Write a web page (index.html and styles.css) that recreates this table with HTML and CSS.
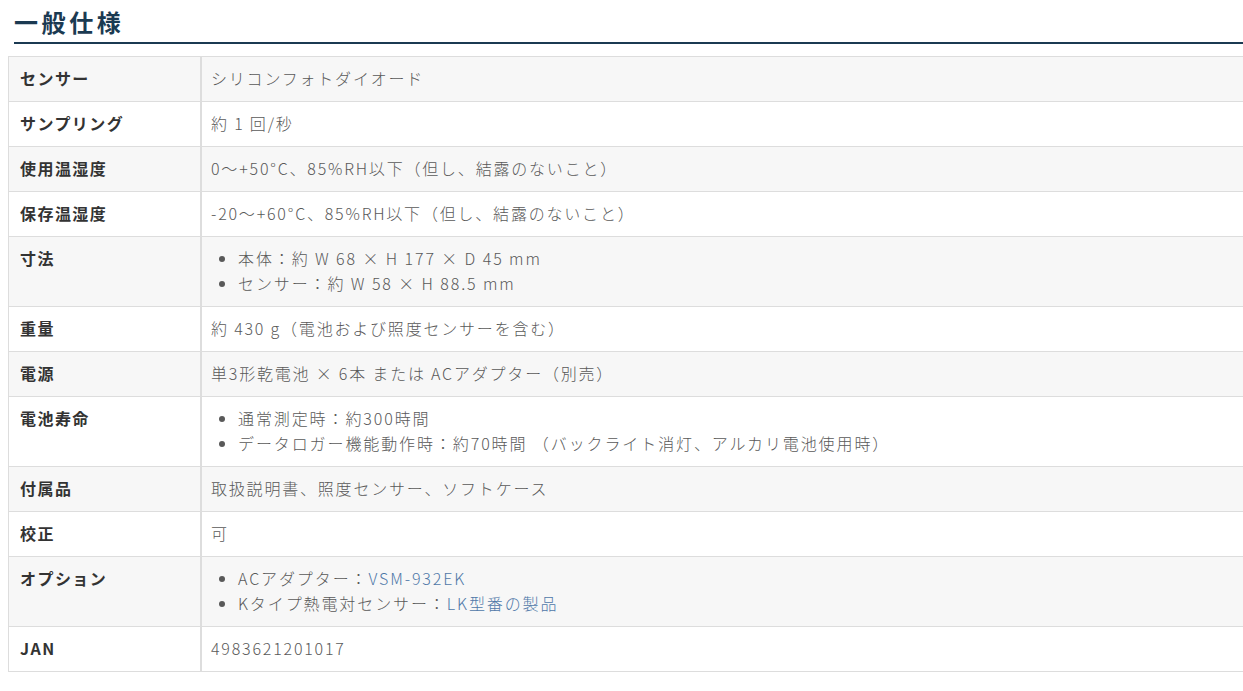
FILE: index.html
```html
<!DOCTYPE html>
<html lang="ja">
<head>
<meta charset="utf-8">
<link rel="stylesheet" href="styles.css">
</head>
<body>
<h2 class="title">一般仕様</h2>
<table class="spec">
  <tr><th>センサー</th><td>シリコンフォトダイオード</td></tr>
  <tr><th>サンプリング</th><td>約 1 回/秒</td></tr>
  <tr><th>使用温湿度</th><td>0～+50°C、85%RH以下（但し、結露のないこと）</td></tr>
  <tr><th>保存温湿度</th><td>-20～+60°C、85%RH以下（但し、結露のないこと）</td></tr>
  <tr><th>寸法</th><td><ul><li>本体：約 W 68 × H 177 × D 45 mm</li><li>センサー：約 W 58 × H 88.5 mm</li></ul></td></tr>
  <tr><th>重量</th><td>約 430 g（電池および照度センサーを含む）</td></tr>
  <tr><th>電源</th><td>単3形乾電池 × 6本 または ACアダプター（別売）</td></tr>
  <tr><th>電池寿命</th><td><ul><li>通常測定時：約300時間</li><li>データロガー機能動作時：約70時間 （バックライト消灯、アルカリ電池使用時）</li></ul></td></tr>
  <tr><th>付属品</th><td>取扱説明書、照度センサー、ソフトケース</td></tr>
  <tr><th>校正</th><td>可</td></tr>
  <tr><th>オプション</th><td><ul><li>ACアダプター：<a href="#">VSM-932EK</a></li><li>Kタイプ熱電対センサー：<a href="#">LK型番の製品</a></li></ul></td></tr>
  <tr><th>JAN</th><td>4983621201017</td></tr>
</table>
</body>
</html>
```
FILE: styles.css
```css
html, body {
  margin: 0;
  padding: 0;
  background: #fff;
}
body {
  padding: 0 0 0 8px;
  font-family: "Noto Sans CJK JP", "Noto Sans", sans-serif;
  width: 1260px;
}
.title {
  margin: 0 0 12px 6px;
  padding: 4px 0 2px;
  font-size: 24px;
  font-weight: 700;
  line-height: 36px;
  letter-spacing: 0.15em;
  color: #1b3a52;
  border-bottom: 2px solid #1b3a52;
}
.spec {
  border-collapse: collapse;
  width: 100%;
  font-size: 16px;
  line-height: 25px;
}
.spec tr:nth-child(odd) {
  background: #f7f7f7;
}
.spec th, .spec td {
  border: 1px solid #ddd;
  vertical-align: top;
  text-align: left;
  padding: 9px 10px 10px;
}
.spec th {
  width: 170px;
  padding-left: 11px;
  font-weight: 700;
  color: #333;
  letter-spacing: 0.09em;
  border-right: 2px solid #ddd;
}
.spec td {
  color: #595959;
  font-weight: 300;
  letter-spacing: 1.8px;
  padding-left: 9px;
}
.spec ul {
  margin: 0;
  padding-left: 27px;
}
.spec li {
  letter-spacing: 1.9px;
}
.spec a {
  color: #4f78a8;
  text-decoration: none;
}
```
